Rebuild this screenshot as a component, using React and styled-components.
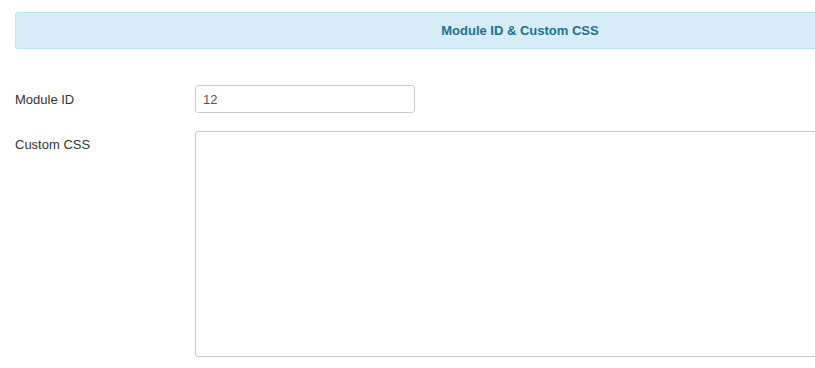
import React from "react";
import styled, { createGlobalStyle } from "styled-components";

const Global = createGlobalStyle`
  html, body {
    margin: 0;
    padding: 0;
    background: #fff;
    overflow: hidden;
  }
  body {
    font-family: "Liberation Sans", Arial, Helvetica, sans-serif;
    font-size: 13px;
    color: #333;
  }
`;

// the settings panel is wider than the window, the frame clips its right side
const Frame = styled.div`
  width: 100vw;
  height: 100vh;
  overflow: hidden;
`;

const Page = styled.div`
  width: 1010px;
  padding: 12px 0 0 15px;
`;

const Heading = styled.div`
  height: 35px;
  display: flex;
  align-items: center;
  justify-content: center;
  background: #d6edf7;
  border: 1px solid #b3e6f3;
  border-radius: 3px;
  color: #21708f;
  font-weight: bold;
  font-size: 13px;
`;

const Form = styled.div`
  display: flex;
  flex-direction: column;
  gap: 18px;
  margin-top: 36px;
`;

const Row = styled.div`
  display: grid;
  grid-template-columns: 180px 1fr;
  align-items: ${(p) => (p.$top ? "start" : "center")};
`;

const Label = styled.label`
  font-size: 13px;
  color: #333;
  padding-top: ${(p) => (p.$top ? "6px" : "0")};
`;

const Input = styled.input`
  box-sizing: border-box;
  width: 220px;
  height: 28px;
  padding: 0 7px;
  border: 1px solid #ccc;
  border-radius: 3px;
  font-family: inherit;
  font-size: 13px;
  color: #555;
  outline: none;
`;

const Area = styled.textarea`
  box-sizing: border-box;
  width: 830px;
  height: 226px;
  border: 1px solid #ccc;
  border-radius: 3px;
  resize: none;
  font-family: inherit;
  outline: none;
`;

export default function App() {
  return (
    <>
      <Global />
      <Frame>
        <Page>
          <Heading>Module ID &amp; Custom CSS</Heading>
          <Form>
            <Row>
              <Label>Module ID</Label>
              <Input defaultValue="12" />
            </Row>
            <Row $top>
              <Label $top>Custom CSS</Label>
              <Area />
            </Row>
          </Form>
        </Page>
      </Frame>
    </>
  );
}
